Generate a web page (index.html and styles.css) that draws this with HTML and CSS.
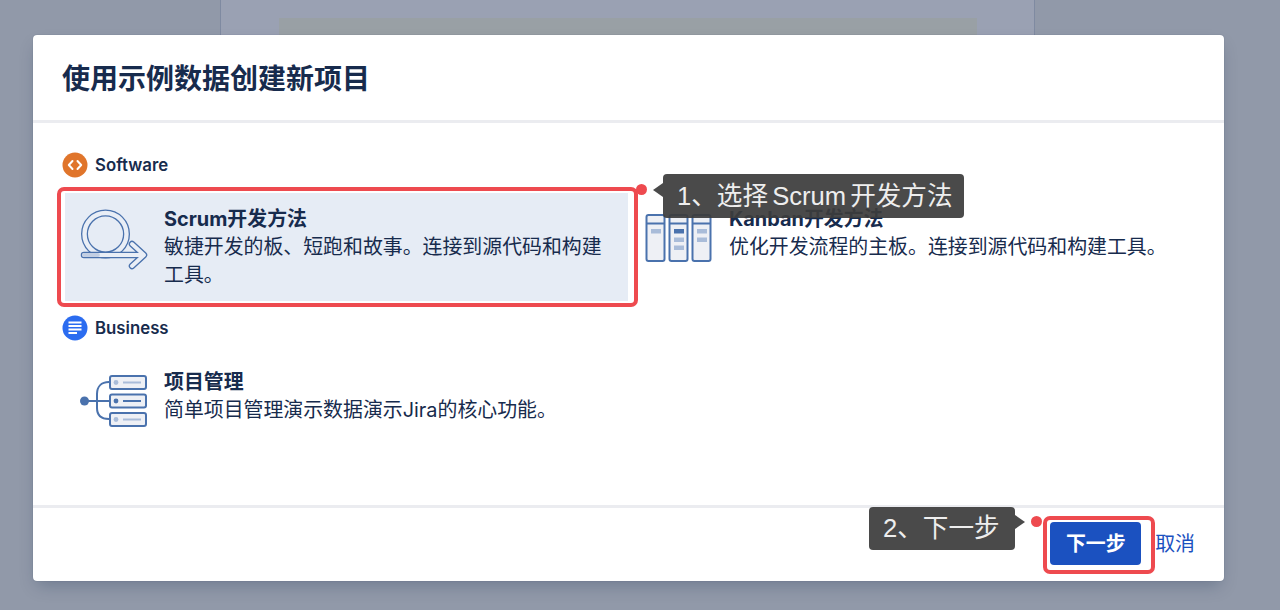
FILE: index.html
```html
<!DOCTYPE html>
<html lang="zh-CN">

<head>
    <meta charset="UTF-8">
    <title>使用示例数据创建新项目</title>
    <link rel="stylesheet" href="styles.css">
</head>

<body>
    <!-- 背景页面 -->
    <div class="backdrop">
        <div class="side"></div>
        <div class="center">
            <div class="center-bar"></div>
        </div>
        <div class="side"></div>
    </div>

    <div class="modal">
        <div class="modal-head">
            <h1>使用示例数据创建新项目</h1>
        </div>

        <div class="modal-body">
            <div class="group-title">
                <svg class="group-icon" viewBox="0 0 26 26">
                    <circle cx="13" cy="13" r="12.5" fill="#e0752b" />
                    <path d="M10.5 9 L6.8 13 L10.5 17 M15.5 9 L19.2 13 L15.5 17" fill="none" stroke="#fff" stroke-width="2" stroke-linecap="round" stroke-linejoin="round" />
                </svg>
                <span>Software</span>
            </div>
            <div class="cards">
                <div class="card active">
                    <svg class="card-icon" viewBox="0 0 68 62">
                        <circle cx="25.500" cy="25" r="21" fill="none" stroke="#4a72ad" stroke-width="7" />
                        <circle cx="25.500" cy="25" r="21" fill="none" stroke="#e9eef6" stroke-width="4.400" />
                        <path d="M4 46 H62 M52 35 L64 46 L52 57" fill="none" stroke="#4a72ad" stroke-width="6.500" stroke-linecap="round" stroke-linejoin="round" />
                        <path d="M4 46 H62 M52 35 L64 46 L52 57" fill="none" stroke="#e9eef6" stroke-width="3.800" stroke-linecap="round" stroke-linejoin="round" />
                        <path d="M4 46 H18" fill="none" stroke="#c3cfe3" stroke-width="3.800" stroke-linecap="round" />
                    </svg>
                    <div class="card-text">
                        <div class="card-name">Scrum开发方法</div>
                        <div class="card-desc">敏捷开发的板、短跑和故事。连接到源代码和构建工具。</div>
                    </div>
                </div>
                <div class="card">
                    <svg class="card-icon" viewBox="0 0 68 62">
                        <g fill="#eef0f5" stroke="#4a72ad" stroke-width="2">
                            <rect x="1.500" y="6" width="18" height="46" rx="2" />
                            <rect x="24.500" y="6" width="18" height="46" rx="2" />
                            <rect x="47.500" y="6" width="18" height="46" rx="2" />
                        </g>
                        <path d="M2 14.500 H19 M25 14.500 H42 M48 14.500 H65" stroke="#4a72ad" stroke-width="2" />
                        <rect x="6" y="20" width="10" height="4.500" fill="#a9bcd9" />
                        <rect x="29" y="20" width="10" height="4.500" fill="#4a72ad" />
                        <rect x="29" y="28.500" width="10" height="4.500" fill="#a9bcd9" />
                        <rect x="29" y="36.500" width="10" height="4.500" fill="#a9bcd9" />
                        <rect x="52" y="20" width="10" height="4.500" fill="#a9bcd9" />
                        <rect x="52" y="28.500" width="10" height="4.500" fill="#a9bcd9" />
                    </svg>
                    <div class="card-text">
                        <div class="card-name">Kanban开发方法</div>
                        <div class="card-desc">优化开发流程的主板。连接到源代码和构建工具。</div>
                    </div>
                </div>
            </div>

            <div class="group-title second">
                <svg class="group-icon" viewBox="0 0 26 26">
                    <circle cx="13" cy="13" r="12.500" fill="#2b6cf0" />
                    <path d="M6.500 7.500 H19.500 M6.500 11 H19.500 M6.500 14.500 H19.500 M6.500 18 H15" stroke="#fff" stroke-width="1.800" fill="none" />
                </svg>
                <span>Business</span>
            </div>
            <div class="cards">
                <div class="card">
                    <svg class="card-icon" viewBox="0 0 68 62">
                        <circle cx="4.500" cy="29" r="4.500" fill="#4a72ad" />
                        <path d="M4 29 H29 M29 10 C21 10 17 15 17 22 V36 C17 43 21 47 29 47" fill="none" stroke="#4a72ad" stroke-width="2" />
                        <g fill="#eef0f5" stroke="#4a72ad" stroke-width="2">
                            <rect x="30" y="4" width="36" height="13" rx="2" />
                            <rect x="30" y="22.500" width="36" height="13" rx="2" />
                            <rect x="30" y="41" width="36" height="13" rx="2" />
                        </g>
                        <circle cx="36" cy="10.500" r="2.400" fill="#a9bcd9" />
                        <circle cx="36" cy="29" r="2.400" fill="#4a72ad" />
                        <circle cx="36" cy="47.500" r="2.400" fill="#a9bcd9" />
                        <path d="M43 10.500 H61 M43 47.500 H61" stroke="#a9bcd9" stroke-width="2" />
                        <path d="M43 29 H61" stroke="#4a72ad" stroke-width="2" />
                    </svg>
                    <div class="card-text">
                        <div class="card-name">项目管理</div>
                        <div class="card-desc">简单项目管理演示数据演示Jira的核心功能。</div>
                    </div>
                </div>
            </div>
        </div>

        <div class="modal-foot">
            <a class="btn-next" href="javascript:;">下一步</a>
            <a class="btn-cancel" href="javascript:;">取消</a>
        </div>
    </div>

    <!-- 标注 -->
    <span class="frame frame-card"></span>
    <span class="dot dot-card"></span>
    <div class="tip tip-card">1、选择 Scrum 开发方法</div>

    <span class="frame frame-btn"></span>
    <span class="dot dot-btn"></span>
    <div class="tip tip-btn">2、下一步</div>
</body>

</html>
```

FILE: styles.css
```css
* {
    padding: 0;
    margin: 0;
    box-sizing: border-box;
}

html, body {
    height: 610px;
    overflow: hidden;
}

body {
    position: relative;
    background-color: #9199a9;
    font-family: Inter, "Noto Sans CJK SC", sans-serif;
    color: #172b4d;
}

a {
    text-decoration: none;
}

/* 背景页面 */
.backdrop {
    display: flex;
    align-items: flex-start;
    height: 610px;
}

.side {
    width: 220px;
    flex: none;
}

.side:last-child {
    flex: 1;
}

.center {
    width: 815px;
    height: 300px;
    padding: 18px 57px 0 58px;
    background-color: #9aa1b3;
    border-left: 1px solid #7f8aa1;
    border-right: 1px solid #7f8aa1;
}

.center-bar {
    height: 40px;
    background-color: #99a0a5;
}

/* 弹窗 */
.modal {
    position: absolute;
    left: 33px;
    top: 35px;
    width: 1191px;
    height: 546px;
    display: flex;
    flex-direction: column;
    background-color: #fff;
    border-radius: 4px;
    box-shadow: 0 0 1px rgba(9, 30, 66, .4), 0 8px 16px -4px rgba(9, 30, 66, .25);
}

.modal-head {
    height: 88px;
    padding: 26px 29px 0;
    border-bottom: 3px solid #ebecf0;
}

.modal-head h1 {
    font-size: 28px;
    line-height: 36px;
    font-weight: 600;
}

.modal-body {
    flex: 1;
    padding: 29px 29px 0;
}

.group-title {
    display: flex;
    align-items: center;
    gap: 7px;
    height: 25px;
    margin-bottom: 16px;
    font-size: 16.800px;
    font-weight: 600;
}

.group-title.second {
    margin-top: 14px;
}

.group-icon {
    width: 26px;
    height: 26px;
    flex: none;
}

.cards {
    display: grid;
    grid-template-columns: 565px 1fr;
    margin-left: 3px;
    align-items: start;
}

.card {
    display: flex;
    gap: 16px;
    padding: 12px 24px 12px 15px;
}

.card.active {
    width: 563px;
    background-color: #e6ecf5;
}

.card-icon {
    width: 68px;
    height: 62px;
    margin-top: 4px;
    flex: none;
}

.card-text {
    font-size: 19.900px;
    line-height: 28px;
}

.card-name {
    font-weight: 700;
}

/* 底部 */
.modal-foot {
    height: 76px;
    display: flex;
    align-items: flex-start;
    justify-content: flex-end;
    gap: 14px;
    padding: 14px 29px 0 0;
    border-top: 3px solid #ebecf0;
}

.btn-next {
    width: 91px;
    height: 43px;
    line-height: 44px;
    text-align: center;
    color: #fff;
    background-color: #1b51c0;
    border-radius: 4px;
    font-size: 19.900px;
    font-weight: 700;
}

.btn-cancel {
    line-height: 44px;
    color: #1b51c0;
    font-size: 19.900px;
}

/* 标注 */
.frame {
    position: absolute;
    border: 4px solid #ee4a4f;
    border-radius: 7px;
}

.frame-card {
    left: 57px;
    top: 187px;
    width: 581px;
    height: 120px;
}

.frame-btn {
    left: 1043px;
    top: 516px;
    width: 112px;
    height: 58px;
}

.dot {
    position: absolute;
    width: 11px;
    height: 11px;
    border-radius: 50%;
    background-color: #ee4a4f;
}

.dot-card {
    left: 636px;
    top: 184px;
}

.dot-btn {
    left: 1031px;
    top: 516px;
}

.tip {
    position: absolute;
    height: 44px;
    line-height: 44px;
    padding: 0 14px;
    font-family: "Liberation Sans", "Noto Sans CJK SC", sans-serif;
    font-size: 25.600px;
    word-spacing: -3px;
    white-space: nowrap;
    color: #eee;
    background-color: rgba(60, 60, 60, .93);
    border-radius: 4px;
}

.tip::after {
    content: '';
    position: absolute;
    top: 9px;
    border-style: solid;
    border-color: transparent;
    border-width: 7px 10px;
}

.tip-card {
    left: 663px;
    top: 174px;
    width: 301px;
}

.tip-card::after {
    left: -20px;
    border-right-color: rgba(60, 60, 60, .93);
}

.tip-btn {
    left: 869px;
    top: 507px;
    width: 146px;
    height: 43px;
    line-height: 43px;
}

.tip-btn::after {
    top: 8px;
    right: -20px;
    border-left-color: rgba(60, 60, 60, .93);
}
```
